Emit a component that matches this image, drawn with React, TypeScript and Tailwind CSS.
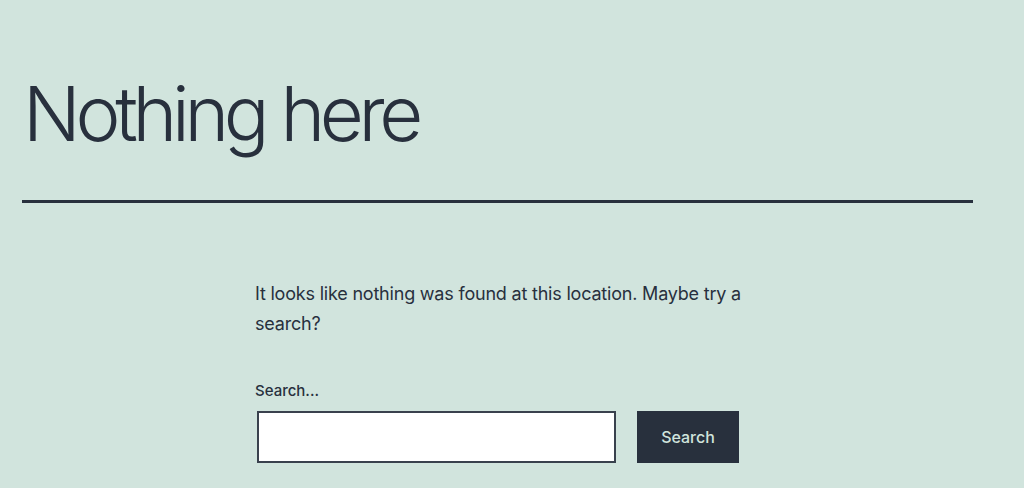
export default function App() {
  return (
    <div
      className="min-h-[488px] w-full bg-[#d1e4dd] text-[#28303d] overflow-hidden"
      style={{ fontFamily: 'Inter, "Noto Sans", sans-serif' }}
    >
      <header className="pt-[75px] pl-[22px]">
        <h1 className="text-[76px] leading-none font-light tracking-[-5.3px] pl-[1px]">Nothing here</h1>
        <div className="mt-[49px] w-[951px] h-[3px] bg-[#28303d]" />
      </header>

      <main className="mt-[76px] ml-[255px] w-[490px]">
        <p className="text-[18px] leading-[30px] tracking-[-0.2px]">
          It looks like nothing was found at this location. Maybe try a search?
        </p>

        <form className="mt-[41px]" onSubmit={(e) => e.preventDefault()}>
          <label htmlFor="s" className="block text-[15px] leading-[22px] font-medium">
            Search...
          </label>
          <div className="mt-[9px] flex items-center gap-[21px]">
            <input
              id="s"
              type="search"
              className="ml-[2px] w-[359px] h-[52px] bg-white border-2 border-[#39414d] outline-none px-3"
            />
            <button
              type="submit"
              className="w-[102px] h-[52px] bg-[#28303d] text-[#d1e4dd] text-[16px] font-medium"
            >
              Search
            </button>
          </div>
        </form>
      </main>
    </div>
  );
}
